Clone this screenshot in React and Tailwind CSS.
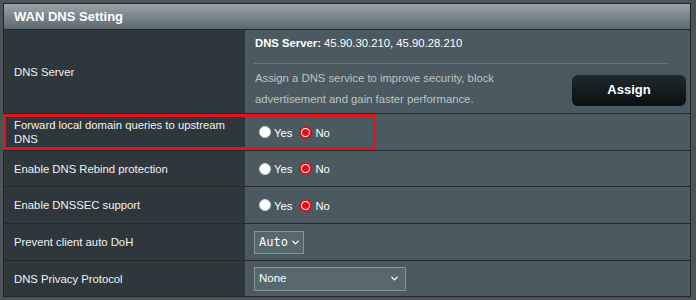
import { ChevronDown } from 'lucide-react';

const Radio = ({ checked }) =>
  checked ? (
    <span className="flex items-center justify-center w-[13px] h-[13px] rounded-full bg-white border-2 border-[#d8111b]">
      <span className="w-[7px] h-[7px] rounded-full bg-[#d8111b]"></span>
    </span>
  ) : (
    <span className="w-[12px] h-[12px] rounded-full bg-white border border-[#d0d0d0]"></span>
  );

const YesNo = () => (
  <div className="flex items-center h-full pl-[14px] text-[11.3px] text-white">
    <Radio />
    <span className="ml-[3px] mt-[2px]">Yes</span>
    <span className="ml-[7px]"><Radio checked /></span>
    <span className="ml-[3px] mt-[2px]">No</span>
  </div>
);

const Row = ({ label, h, children, last }) => (
  <div className={`grid grid-cols-[241px_1fr] ${last ? '' : 'border-b border-[#22292c]'}`}>
    <div className={`flex items-center pl-[10px] pr-2 bg-[#2e383c] text-[11.3px] leading-[14px] text-[#f2f2f2] ${h}`}>
      {label}
    </div>
    <div className={`bg-[#4a5a60] ${h}`}>{children}</div>
  </div>
);

export default function App() {
  return (
    <div className="w-[696px] h-[300px] bg-[#4b5457] pt-[3px] pl-[3px] font-['Liberation_Sans',Arial,sans-serif]">
      <div className="w-[688px] border border-[#1e2427] relative">
        <div className="h-[26px] flex items-center pl-[10px] bg-gradient-to-b from-[#97a5a9] to-[#5c696e] border-b border-[#22292c] text-[13px] font-bold text-white">
          WAN DNS Setting
        </div>

        <Row label="DNS Server" h="h-[83px]">
          <div className="flex flex-col pt-[3px] text-[11.3px]">
            <div className="pl-[10px] leading-[20px] text-white">
              <span className="font-bold">DNS Server:</span> 45.90.30.210, 45.90.28.210
            </div>
            <div className="ml-[9px] mt-[10px] w-[413px] border-t border-[#6b787d]"></div>
            <div className="flex items-center justify-between mt-[4px] pr-[4px]">
              <p className="pl-[10px] leading-[21px] text-[#b9c3c6]">
                Assign a DNS service to improve security, block
                <br />
                advertisement and gain faster performance.
              </p>
              <button className="w-[114px] h-[31px] mt-[2px] rounded-[6px] bg-gradient-to-b from-[#20292c] to-[#0b1012] text-[13px] font-bold text-white">
                Assign
              </button>
            </div>
          </div>
        </Row>

        <Row label={<span>Forward local domain queries to upstream<br />DNS</span>} h="h-[36px]">
          <YesNo />
        </Row>
        <Row label="Enable DNS Rebind protection" h="h-[35px]">
          <YesNo />
        </Row>
        <Row label="Enable DNSSEC support" h="h-[36px]">
          <YesNo />
        </Row>
        <Row label="Prevent client auto DoH" h="h-[36px]">
          <div className="flex items-center h-full pl-[9px]">
            <div className="flex items-center h-[23px] w-[50px] pl-[4px] bg-[#56676d] border border-[#87959a] text-[12px] text-white font-['DejaVu_Sans_Mono',monospace]">
              Auto
              <ChevronDown className="w-[11px] h-[11px] ml-[2px]" strokeWidth={3} />
            </div>
          </div>
        </Row>
        <Row label="DNS Privacy Protocol" h="h-[35px]" last>
          <div className="flex items-center h-full pl-[9px]">
            <div className="flex items-center justify-between h-[24px] w-[152px] pl-[4px] pr-[5px] bg-[#56686e] border border-[#87959a] text-[11.5px] text-white">
              None
              <ChevronDown className="w-[11px] h-[11px]" strokeWidth={3} />
            </div>
          </div>
        </Row>

        <div className="absolute left-[-1px] top-[110px] w-[373px] h-[36px] border-[3px] border-[#e0161c]"></div>
      </div>
    </div>
  );
}
